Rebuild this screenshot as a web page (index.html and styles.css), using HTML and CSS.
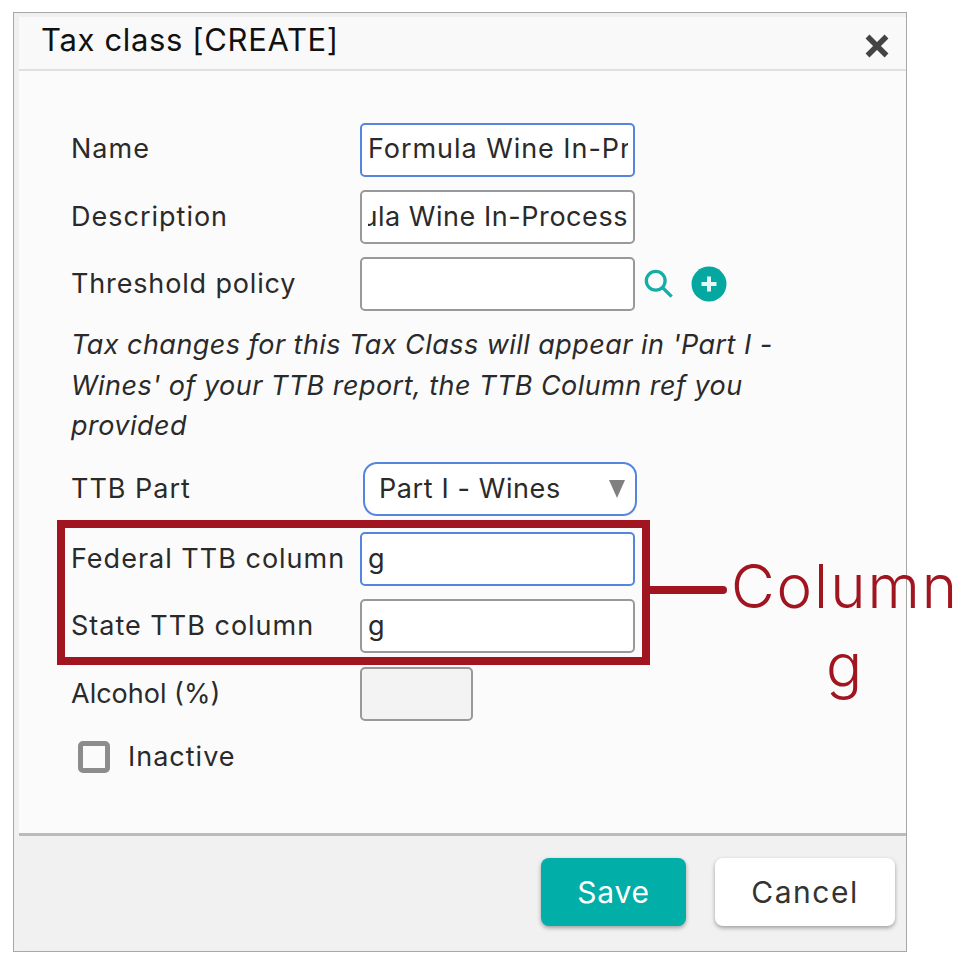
FILE: index.html
```html
<!DOCTYPE html>
<html lang="en">
<head>
<meta charset="utf-8">
<title>Tax class [CREATE]</title>
<link rel="stylesheet" href="styles.css">
</head>
<body>
<div class="stage">
  <div class="dialog">
    <header class="head">
      <h1 class="title">Tax class [CREATE]</h1>
      <svg class="close" viewBox="0 0 24 24" aria-label="Close"><path d="M2.500 2.500 21.500 21.500M21.500 2.500 2.500 21.500"/></svg>
    </header>
    <main class="body">
      <div class="row row-name">
        <label class="label">Name</label>
        <div class="field focus"><span class="clip"><span class="val">Formula Wine In-Process</span></span></div>
      </div>
      <div class="row row-desc">
        <label class="label">Description</label>
        <div class="field"><span class="clip end"><span class="val">Formula Wine In-Process</span></span></div>
      </div>
      <div class="row row-thresh">
        <label class="label">Threshold policy</label>
        <div class="field"></div>
        <svg class="search" viewBox="0 0 32 32" aria-label="Search"><circle cx="12.500" cy="12.500" r="10"/><path d="M20 20 29.500 29.500"/></svg>
        <svg class="plus" viewBox="0 0 36 36" aria-label="Add"><circle class="plus-bg" cx="18" cy="18" r="17.500"/><path class="plus-mark" d="M18 10.500V25.500M10.500 18H25.500"/></svg>
      </div>
      <p class="note">Tax changes for this Tax Class will appear in 'Part I - Wines' of your TTB report, the TTB Column ref you provided</p>
      <div class="row row-part">
        <label class="label">TTB Part</label>
        <div class="select"><span class="val">Part I - Wines</span><span class="caret"></span></div>
      </div>
      <div class="row row-fed">
        <label class="label">Federal TTB column</label>
        <div class="field focus"><span class="val">g</span></div>
      </div>
      <div class="row row-state">
        <label class="label">State TTB column</label>
        <div class="field"><span class="val">g</span></div>
      </div>
      <div class="row row-alc">
        <label class="label">Alcohol (%)</label>
        <div class="field short"></div>
      </div>
      <div class="check-row">
        <span class="check"></span>
        <label class="label">Inactive</label>
      </div>
    </main>
    <footer class="foot">
      <button class="btn save">Save</button>
      <button class="btn cancel">Cancel</button>
    </footer>
  </div>
  <div class="callout-box"></div>
  <div class="callout-line"></div>
  <div class="callout-text">Column g</div>
</div>
</body>
</html>
```
FILE: styles.css
```css
* { box-sizing: border-box; }
html, body { margin: 0; padding: 0; background: #fff; }
body { width: 967px; height: 969px; overflow: hidden; font-family: Inter, "Noto Sans", sans-serif; color: #2a2a2a; }
.stage { position: relative; width: 967px; height: 969px; padding: 12px 0 0 13px; }
.dialog { width: 894px; height: 940px; border: 1px solid #a8a8a8; background: #f0f0f0; padding: 4px 0 4px 5px; display: flex; flex-direction: column; }
.head { height: 54px; flex: none; background: #f9f9f9; border-bottom: 2px solid #e0e0e0; display: flex; justify-content: space-between; padding: 0 17px 0 22px; }
.title { margin: 0; font-size: 31px; font-weight: 400; color: #111; line-height: 46px; letter-spacing: .65px; }
.close { width: 24px; height: 24px; margin-top: 17px; fill: none; stroke: #444; stroke-width: 5.5; }
.body { flex: none; height: 765px; background: #fbfbfb; border-bottom: 3px solid #bbb; padding: 52px 0 0 52px; }
.row { display: flex; align-items: center; height: 54px; }
.row-desc { margin-top: 13px; }
.row-thresh { margin-top: 13px; }
.row-part { margin-top: 15px; }
.row-fed { margin-top: 16px; }
.row-state { margin-top: 13px; }
.row-alc { margin-top: 14px; }
.label { width: 289px; flex: none; font-size: 27px; letter-spacing: 1px; white-space: nowrap; padding-bottom: 1px; }
.row-name .label { padding-bottom: 3px; }
.row-thresh .label { letter-spacing: .85px; }
.row-alc .label { letter-spacing: 0; }
.field { width: 275px; height: 54px; flex: none; border: 2px solid #999; border-radius: 5px; background: #fff; display: flex; align-items: center; padding: 0 5px 0 6px; }
.focus { border-color: #5585dc; }
.clip { flex: 1; min-width: 0; overflow: hidden; display: flex; padding-bottom: 3px; }
.end { justify-content: flex-end; padding-bottom: 1px; }
.end .val { letter-spacing: .55px; }
.short { width: 113px; background: #f3f3f3; }
.val { font-size: 27px; letter-spacing: .95px; white-space: nowrap; flex: none; }
.search { width: 30px; height: 30px; margin-left: 9px; fill: none; stroke: #14aea6; stroke-width: 3.5; }
.plus { width: 36px; height: 36px; margin-left: 17px; }
.plus-bg { fill: #05a8a0; }
.plus-mark { fill: none; stroke: #e4f6f5; stroke-width: 4; }
.note { margin: 14px 110px 15px 0; font-size: 27px; font-style: italic; line-height: 40.500px; letter-spacing: .45px; }
.select { width: 274px; height: 54px; margin-left: 3px; flex: none; border: 2px solid #5585dc; border-radius: 14px; background: #fff; display: flex; align-items: center; justify-content: space-between; padding: 0 10px 1px 14px; }
.select .val { letter-spacing: .6px; }
.caret { width: 0; height: 0; margin-top: 1px; border-left: 8.500px solid transparent; border-right: 8.500px solid transparent; border-top: 18px solid #808080; }
.check-row { display: flex; align-items: center; gap: 18px; margin: 20px 0 0 7px; height: 32px; }
.check { width: 32px; height: 32px; flex: none; border: 5px solid #8c8c8c; border-radius: 5px; background: #fbfbfb; }
.foot { flex: 1; background: #f1f1f1; display: flex; justify-content: flex-end; align-items: flex-start; gap: 29px; padding: 22px 11px 0 0; }
.btn { height: 68px; border: 0; border-radius: 8px; font-family: inherit; font-size: 30px; box-shadow: 0 2px 4px rgba(0,0,0,.35); }
.save { width: 145px; background: #02aea8; color: #fff; letter-spacing: .8px; }
.cancel { width: 180px; background: #fff; color: #333; letter-spacing: 1.500px; }
.callout-box { position: absolute; left: 57px; top: 520px; width: 593px; height: 145px; border: 8px solid #a0151f; }
.callout-line { position: absolute; left: 650px; top: 586px; width: 77px; height: 8px; background: #a0151f; border-radius: 0 4px 4px 0; }
.callout-text { position: absolute; left: 724px; top: 547px; width: 242px; font-size: 60px; font-weight: 300; letter-spacing: 2px; line-height: 79px; text-align: center; color: #a0151f; }
```
